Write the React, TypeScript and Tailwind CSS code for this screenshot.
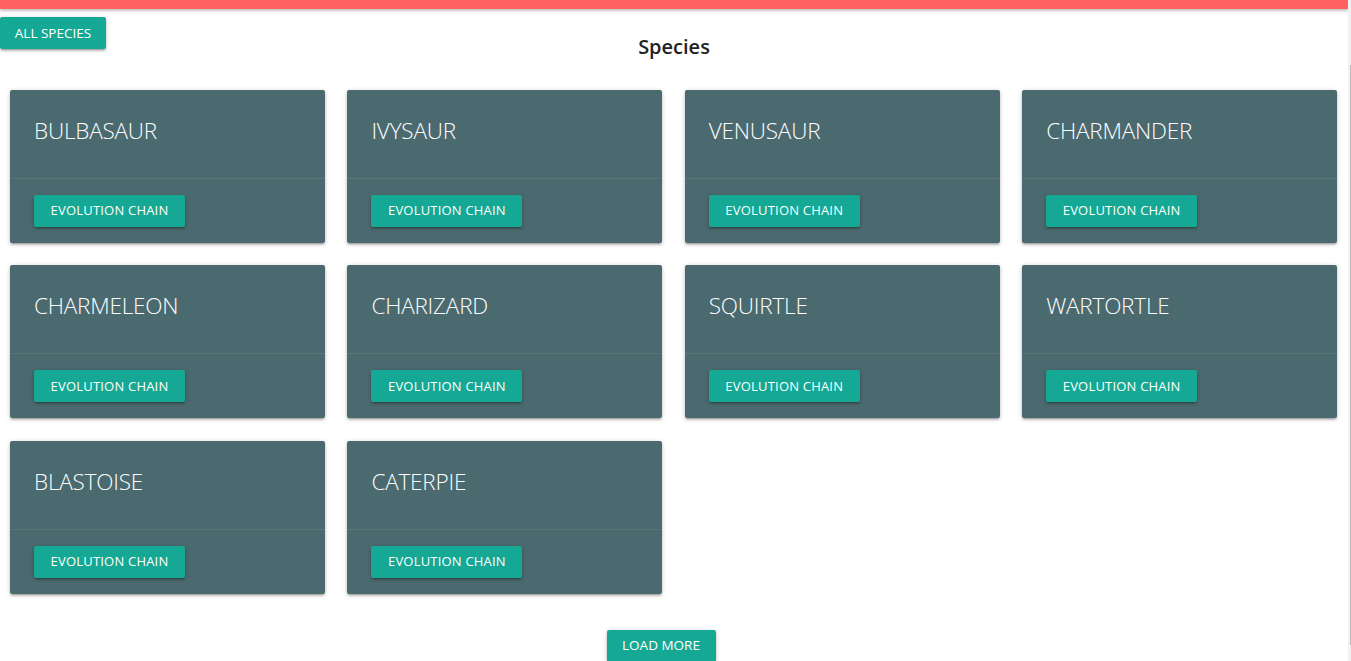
import React from "react";

const species = [
  "BULBASAUR",
  "IVYSAUR",
  "VENUSAUR",
  "CHARMANDER",
  "CHARMELEON",
  "CHARIZARD",
  "SQUIRTLE",
  "WARTORTLE",
  "BLASTOISE",
  "CATERPIE",
];

const font = { fontFamily: '"Open Sans", "Noto Sans", sans-serif' };

function Card({ name }: { name: string }) {
  return (
    <div className="bg-[#4b6a6f] rounded-[2px] shadow-[0_2px_2px_0_rgba(0,0,0,0.14),0_3px_1px_-2px_rgba(0,0,0,0.12),0_1px_5px_0_rgba(0,0,0,0.2)] h-[153px] flex flex-col">
      <div className="px-6 pt-[25px] h-[88px]">
        <div className="text-[22.5px] leading-8 font-light text-white tracking-[-0.2px]">{name}</div>
      </div>
      <div className="border-t border-[rgba(160,160,160,0.2)] px-6 py-4">
        <button className="h-8 w-[151px] bg-[#15a894] text-white text-[13px] tracking-[0.2px] rounded-[2px] shadow-[0_2px_2px_0_rgba(0,0,0,0.14),0_3px_1px_-2px_rgba(0,0,0,0.12),0_1px_5px_0_rgba(0,0,0,0.2)]">
          EVOLUTION CHAIN
        </button>
      </div>
    </div>
  );
}

export default function App() {
  return (
    <div className="flex h-[661px] overflow-hidden bg-white" style={font}>
      <div className="w-[1348px] shrink-0 relative">
        <div className="h-[9px] bg-[#ff6361] shadow-[0_2px_3px_rgba(0,0,0,0.25)]" />
        <div className="relative h-[81px]">
          <button className="absolute left-0 top-[8px] h-8 w-[106px] bg-[#15a894] text-white text-[13.5px] rounded-[2px] shadow-[0_2px_2px_0_rgba(0,0,0,0.14),0_3px_1px_-2px_rgba(0,0,0,0.12),0_1px_5px_0_rgba(0,0,0,0.2)]">
            ALL SPECIES
          </button>
          <h1 className="pt-[24px] text-center text-[20px] leading-[28px] font-semibold text-[#222]">
            Species
          </h1>
        </div>
        <div className="grid grid-cols-[315px_315px_315px_315px] gap-x-[22.4px] gap-y-[22.3px] pl-[10px]">
          {species.map((s) => (
            <Card key={s} name={s} />
          ))}
        </div>
        <div className="flex justify-center pt-[36px] pr-[26px]">
          <button className="h-8 w-[109px] bg-[#15a894] text-white text-[13.5px] rounded-[2px] shadow-[0_2px_2px_0_rgba(0,0,0,0.14),0_3px_1px_-2px_rgba(0,0,0,0.12),0_1px_5px_0_rgba(0,0,0,0.2)]">
            LOAD MORE
          </button>
        </div>
      </div>
      <div className="w-[3px] bg-[#f1f1f1] relative flex-1">
        <div className="absolute right-0 top-[65px] h-[580px] w-[1px] bg-[#bdbdbd]" />
      </div>
    </div>
  );
}
